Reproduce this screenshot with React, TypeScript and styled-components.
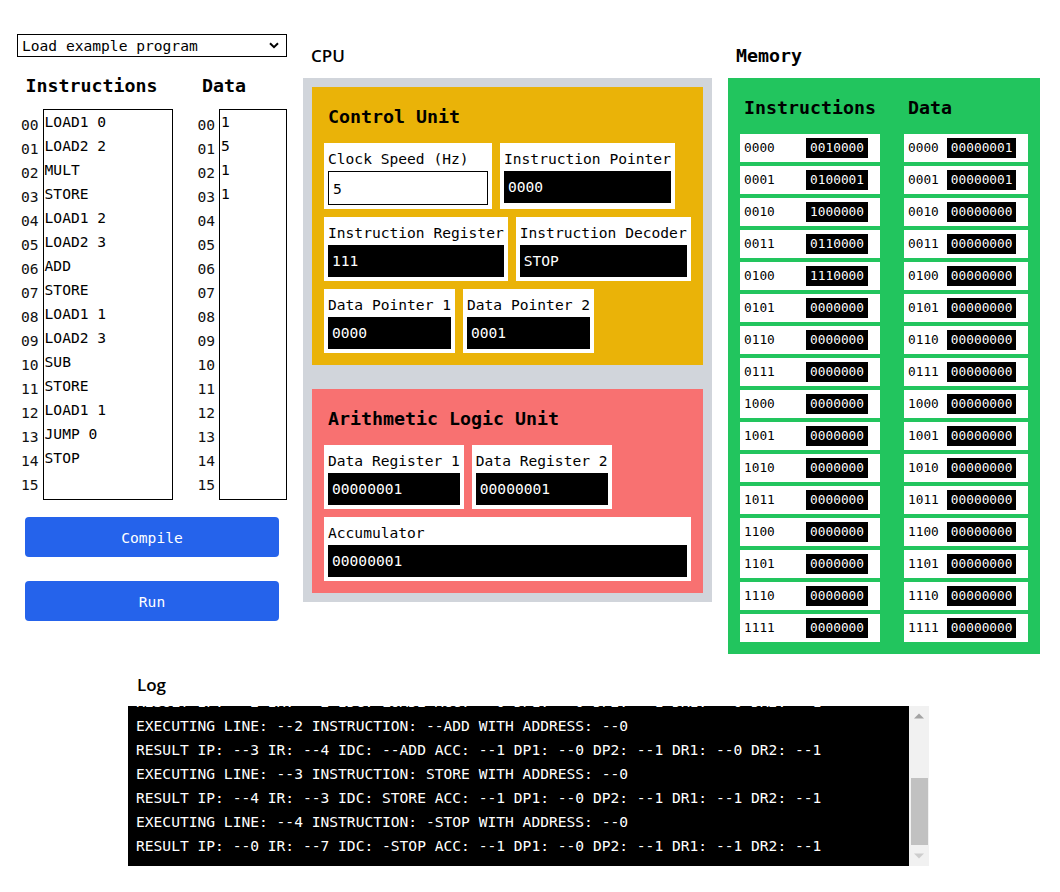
import React, { useLayoutEffect, useRef } from "react";
import styled, { createGlobalStyle } from "styled-components";

const MONO = `"DejaVu Sans Mono", "Liberation Mono", monospace`;
const SANS = `"Open Sans", "Noto Sans", sans-serif`;

const GlobalStyle = createGlobalStyle`
  html, body { margin: 0; padding: 0; background: #fff; }
  body { font-family: ${MONO}; font-size: 14.6px; color: #000; }
  * { box-sizing: border-box; }
`;

const Page = styled.div`
  width: 1040px;
  padding: 34px 0 20px 17px;
  display: flex;
  flex-direction: column;
`;

const TopRow = styled.div`
  display: flex;
  gap: 16px;
  align-items: flex-start;
`;

const LeftCol = styled.div`
  width: 270px;
  display: flex;
  flex-direction: column;
`;

const SelectWrap = styled.div`
  position: relative;
  height: 23px;
`;

const ProgramSelect = styled.select`
  appearance: none;
  -webkit-appearance: none;
  width: 100%;
  height: 23px;
  margin: 0;
  border: 1px solid #000;
  border-radius: 0;
  background: #fff;
  padding: 0 0 0 4px;
  font-family: ${MONO};
  font-size: 14.6px;
  color: #000;
  outline: none;
`;

const Chevron = styled.svg`
  position: absolute;
  right: 8px;
  top: 8px;
  pointer-events: none;
`;

const EditorRow = styled.div`
  display: flex;
  justify-content: space-between;
  margin-top: 15px;
`;

const EditorGroup = styled.div`
  display: flex;
  flex-direction: column;
`;

const GroupTitle = styled.h2`
  margin: 0 0 9px;
  padding-left: 8.5px;
  font-family: ${MONO};
  font-size: 18.3px;
  line-height: 28px;
  font-weight: 700;
`;

const EditorBody = styled.div`
  display: flex;
  align-items: flex-start;
`;

const LineNumbers = styled.div`
  padding: 4px 4px 0 4px;
  line-height: 24px;
  font-size: 14.6px;
  color: #111;
`;

const CodeArea = styled.textarea<{ $w: number }>`
  width: ${(p) => p.$w}px;
  height: 391px;
  margin: 0;
  border: 1px solid #000;
  border-radius: 0;
  padding: 0 1px;
  resize: none;
  overflow: hidden;
  font-family: ${MONO};
  font-size: 14.6px;
  line-height: 24px;
  color: #000;
  background: #fff;
  outline: none;
`;

const ButtonStack = styled.div`
  display: flex;
  flex-direction: column;
  gap: 24px;
  margin-top: 17px;
  padding: 0 8px;
`;

const ActionButton = styled.button`
  height: 40px;
  border: none;
  border-radius: 4px;
  background: #2563eb;
  color: #fff;
  font-family: ${MONO};
  font-size: 14.6px;
  cursor: pointer;
`;

const Column = styled.div<{ $w: number }>`
  width: ${(p) => p.$w}px;
  padding-top: 8px;
  display: flex;
  flex-direction: column;
`;

const ColumnLabel = styled.h1<{ $mono?: boolean }>`
  margin: 0 0 8px;
  padding-left: 8px;
  font-family: ${(p) => (p.$mono ? MONO : SANS)};
  font-size: ${(p) => (p.$mono ? "18.3px" : "17px")};
  font-weight: ${(p) => (p.$mono ? 700 : 600)};
  line-height: 28px;
`;

const CpuFrame = styled.div`
  background: #d1d5db;
  padding: 9px;
  display: flex;
  flex-direction: column;
  gap: 24px;
`;

const Unit = styled.section<{ $bg: string }>`
  background: ${(p) => p.$bg};
  padding: 12px;
  display: flex;
  flex-direction: column;
  gap: 8px;
`;

const UnitTitle = styled.h2`
  margin: 0;
  padding: 4px;
  font-family: ${MONO};
  font-size: 18.3px;
  line-height: 28px;
  font-weight: 700;
`;

const RegRow = styled.div`
  display: flex;
  gap: 8px;
`;

const RegCard = styled.div<{ $grow?: boolean }>`
  background: #fff;
  padding: 4px;
  display: flex;
  flex-direction: column;
  flex: ${(p) => (p.$grow ? "1 1 auto" : "0 0 auto")};
`;

const RegLabel = styled.div`
  line-height: 24px;
  white-space: nowrap;
`;

const RegValue = styled.div`
  background: #000;
  color: #fff;
  height: 32px;
  line-height: 32px;
  padding: 0 4px;
  white-space: nowrap;
`;

const ClockInput = styled.input`
  width: 160px;
  height: 34px;
  margin: 0;
  border: 1px solid #000;
  border-radius: 0;
  padding: 0 4px;
  font-family: ${MONO};
  font-size: 14.6px;
  color: #000;
  outline: none;
`;

const MemFrame = styled.div`
  background: #22c55e;
  padding: 12px;
  display: flex;
  gap: 24px;
`;

const MemColumn = styled.div<{ $w: number }>`
  width: ${(p) => p.$w}px;
  display: flex;
  flex-direction: column;
  gap: 4px;
`;

const MemTitle = styled.h2`
  margin: 0 0 4px;
  padding: 4px;
  font-family: ${MONO};
  font-size: 18.3px;
  line-height: 28px;
  font-weight: 700;
  white-space: nowrap;
`;

const MemRow = styled.div`
  background: #fff;
  display: flex;
  justify-content: space-between;
  align-items: center;
  gap: 8px;
  padding: 4px 12px 4px 4px;
  font-size: 12.8px;
  line-height: 20px;
`;

const MemValue = styled.span`
  background: #000;
  color: #fff;
  padding: 0 4px;
  line-height: 20px;
`;

const LogSection = styled.section`
  align-self: center;
  width: 801px;
  margin-top: 17px;
`;

const LogTitle = styled.h2`
  margin: 0 0 7px;
  padding-left: 9px;
  font-family: ${SANS};
  font-size: 17px;
  font-weight: 600;
  line-height: 28px;
`;

const LogFrame = styled.div`
  display: flex;
  height: 160px;
`;

const LogBox = styled.div`
  flex: 1 1 auto;
  height: 160px;
  background: #000;
  color: #fff;
  padding: 8px;
  overflow: hidden;
  font-size: 14.6px;
  line-height: 24px;
  white-space: pre;
`;

const ScrollRail = styled.div`
  width: 20px;
  flex: 0 0 20px;
  background: #f1f1f1;
  display: flex;
  flex-direction: column;
`;

const RailButton = styled.div`
  height: 20px;
  flex: 0 0 20px;
  display: flex;
  align-items: center;
  justify-content: center;
`;

const RailTrack = styled.div`
  flex: 1 1 auto;
  display: flex;
  flex-direction: column;
  justify-content: flex-end;
`;

const RailThumb = styled.div`
  height: 67px;
  margin: 0 1px 1px 2px;
  background: #c1c1c1;
`;

const LogLine = styled.div``;

const program = [
  "LOAD1 0",
  "LOAD2 2",
  "MULT",
  "STORE",
  "LOAD1 2",
  "LOAD2 3",
  "ADD",
  "STORE",
  "LOAD1 1",
  "LOAD2 3",
  "SUB",
  "STORE",
  "LOAD1 1",
  "JUMP 0",
  "STOP",
].join("\n");

const dataValues = ["1", "5", "1", "1"].join("\n");

const nums = Array.from({ length: 16 }, (_, i) => String(i).padStart(2, "0"));
const addrs = Array.from({ length: 16 }, (_, i) => i.toString(2).padStart(4, "0"));
const instrMem = ["0010000", "0100001", "1000000", "0110000", "1110000"];
const dataMem = ["00000001", "00000001"];

const logLines = [
  "LOADING PROGRAM...",
  "COMPILED SUCCESSFULLY",
  "EXECUTING LINE: --0 INSTRUCTION: LOAD1 WITH ADDRESS: --0",
  "RESULT IP: --1 IR: --1 IDC: LOAD1 ACC: --0 DP1: --0 DP2: --0 DR1: --0 DR2: --0",
  "EXECUTING LINE: --1 INSTRUCTION: LOAD2 WITH ADDRESS: --1",
  "RESULT IP: --2 IR: --2 IDC: LOAD2 ACC: --0 DP1: --0 DP2: --1 DR1: --0 DR2: --1",
  "EXECUTING LINE: --2 INSTRUCTION: --ADD WITH ADDRESS: --0",
  "RESULT IP: --3 IR: --4 IDC: --ADD ACC: --1 DP1: --0 DP2: --1 DR1: --0 DR2: --1",
  "EXECUTING LINE: --3 INSTRUCTION: STORE WITH ADDRESS: --0",
  "RESULT IP: --4 IR: --3 IDC: STORE ACC: --1 DP1: --0 DP2: --1 DR1: --1 DR2: --1",
  "EXECUTING LINE: --4 INSTRUCTION: -STOP WITH ADDRESS: --0",
  "RESULT IP: --0 IR: --7 IDC: -STOP ACC: --1 DP1: --0 DP2: --1 DR1: --1 DR2: --1",
];

function Register({ label, value, grow }: { label: string; value: string; grow?: boolean }) {
  return (
    <RegCard $grow={grow}>
      <RegLabel>{label}</RegLabel>
      <RegValue>{value}</RegValue>
    </RegCard>
  );
}

export default function App() {
  const logRef = useRef<HTMLDivElement>(null);
  useLayoutEffect(() => {
    if (logRef.current) logRef.current.scrollTop = logRef.current.scrollHeight;
  }, []);

  return (
    <>
      <GlobalStyle />
      <Page>
        <TopRow>
          <LeftCol>
            <SelectWrap>
              <ProgramSelect defaultValue="">
                <option value="">Load example program</option>
                <option value="mult">Multiply</option>
              </ProgramSelect>
              <Chevron width="10" height="7" viewBox="0 0 10 7">
                <path d="M1 1.2 L5 5.2 L9 1.2" fill="none" stroke="#000" strokeWidth="2" />
              </Chevron>
            </SelectWrap>
            <EditorRow>
              <EditorGroup>
                <GroupTitle>Instructions</GroupTitle>
                <EditorBody>
                  <LineNumbers>
                    {nums.map((n) => (
                      <div key={n}>{n}</div>
                    ))}
                  </LineNumbers>
                  <CodeArea $w={130} defaultValue={program} spellCheck={false} />
                </EditorBody>
              </EditorGroup>
              <EditorGroup>
                <GroupTitle>Data</GroupTitle>
                <EditorBody>
                  <LineNumbers>
                    {nums.map((n) => (
                      <div key={n}>{n}</div>
                    ))}
                  </LineNumbers>
                  <CodeArea $w={68} defaultValue={dataValues} spellCheck={false} />
                </EditorBody>
              </EditorGroup>
            </EditorRow>
            <ButtonStack>
              <ActionButton>Compile</ActionButton>
              <ActionButton>Run</ActionButton>
            </ButtonStack>
          </LeftCol>

          <Column $w={409}>
            <ColumnLabel>CPU</ColumnLabel>
            <CpuFrame>
              <Unit $bg="#eab308">
                <UnitTitle>Control Unit</UnitTitle>
                <RegRow>
                  <RegCard>
                    <RegLabel>Clock Speed (Hz)</RegLabel>
                    <ClockInput defaultValue="5" />
                  </RegCard>
                  <Register label="Instruction Pointer" value="0000" />
                </RegRow>
                <RegRow>
                  <Register label="Instruction Register" value="111" />
                  <Register label="Instruction Decoder" value="STOP" />
                </RegRow>
                <RegRow>
                  <Register label="Data Pointer 1" value="0000" />
                  <Register label="Data Pointer 2" value="0001" />
                </RegRow>
              </Unit>
              <Unit $bg="#f87171">
                <UnitTitle>Arithmetic Logic Unit</UnitTitle>
                <RegRow>
                  <Register label="Data Register 1" value="00000001" />
                  <Register label="Data Register 2" value="00000001" />
                </RegRow>
                <RegRow>
                  <Register label="Accumulator" value="00000001" grow />
                </RegRow>
              </Unit>
            </CpuFrame>
          </Column>

          <Column $w={312}>
            <ColumnLabel $mono>Memory</ColumnLabel>
            <MemFrame>
              <MemColumn $w={140}>
                <MemTitle>Instructions</MemTitle>
                {addrs.map((a, i) => (
                  <MemRow key={a}>
                    <span>{a}</span>
                    <MemValue>{instrMem[i] ?? "0000000"}</MemValue>
                  </MemRow>
                ))}
              </MemColumn>
              <MemColumn $w={124}>
                <MemTitle>Data</MemTitle>
                {addrs.map((a, i) => (
                  <MemRow key={a}>
                    <span>{a}</span>
                    <MemValue>{dataMem[i] ?? "00000000"}</MemValue>
                  </MemRow>
                ))}
              </MemColumn>
            </MemFrame>
          </Column>
        </TopRow>

        <LogSection>
          <LogTitle>Log</LogTitle>
          <LogFrame>
            <LogBox ref={logRef}>
              {logLines.map((l, i) => (
                <LogLine key={i}>{l}</LogLine>
              ))}
            </LogBox>
            <ScrollRail>
              <RailButton>
                <svg width="10" height="6" viewBox="0 0 10 6">
                  <path d="M0 5.5 L5 0.5 L10 5.5 Z" fill="#a3a3a3" />
                </svg>
              </RailButton>
              <RailTrack>
                <RailThumb />
              </RailTrack>
              <RailButton>
                <svg width="10" height="6" viewBox="0 0 10 6">
                  <path d="M0 0.5 L5 5.5 L10 0.5 Z" fill="#cdcdcd" />
                </svg>
              </RailButton>
            </ScrollRail>
          </LogFrame>
        </LogSection>
      </Page>
    </>
  );
}
